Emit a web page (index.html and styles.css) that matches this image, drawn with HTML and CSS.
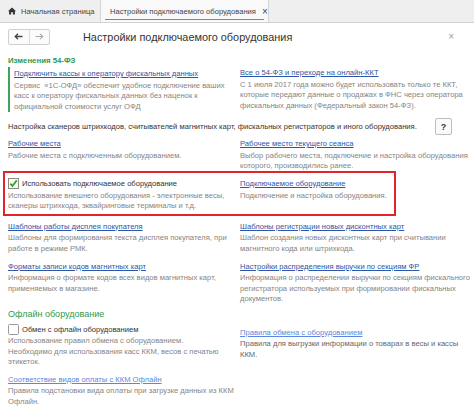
FILE: index.html
```html
<!DOCTYPE html>
<html lang="ru">
<head>
<meta charset="utf-8">
<title>Настройки подключаемого оборудования</title>
<link rel="stylesheet" href="styles.css">
</head>
<body>
<div class="tabs">
  <div class="tab tab-home">
    <svg class="home-icon" width="8" height="8" viewBox="0 0 8 8"><path d="M4 0.5 L0 4.2 L1.1 4.2 L1.1 7.5 L3.1 7.5 L3.1 5.2 L4.9 5.2 L4.9 7.5 L6.9 7.5 L6.9 4.2 L8 4.2 Z" fill="#333"/></svg>
    <span>Начальная страница</span>
  </div>
  <div class="tab tab-active">
    <span>Настройки подключаемого оборудования</span>
    <span class="tab-close">×</span>
  </div>
</div>

<div class="header">
  <div class="nav">
    <span class="nav-btn">
      <svg width="9" height="7" viewBox="0 0 9 7"><path d="M8.5 3.5 H1.5 M4 0.8 L1.2 3.5 L4 6.2" stroke="#444" stroke-width="1.3" fill="none"/></svg>
    </span>
    <span class="nav-btn">
      <svg width="9" height="7" viewBox="0 0 9 7"><path d="M0.5 3.5 H7.5 M5 0.8 L7.8 3.5 L5 6.2" stroke="#aaa" stroke-width="1.1" fill="none"/></svg>
    </span>
  </div>
  <h1 class="title">Настройки подключаемого оборудования</h1>
  <span class="close">×</span>
</div>

<div class="content">
  <div class="group-title">Изменения 54-ФЗ</div>
  <div class="row row-54">
    <div class="item item-bar">
      <a class="link">Подключить кассы к оператору фискальных данных</a>
      <p class="desc">Сервис&nbsp; «1С-ОФД» обеспечит удобное подключение ваших<br>касс к оператору фискальных данных без наценок к<br>официальной стоимости услуг ОФД</p>
    </div>
    <div class="item">
      <a class="link">Все о 54-ФЗ и переходе на онлайн-ККТ</a>
      <p class="desc">С 1 июля 2017 года можно будет использовать только те ККТ,<br>которые передают данные о продажах в ФНС через оператора<br>фискальных данных (Федеральный закон 54-ФЗ).</p>
    </div>
  </div>

  <div class="intro">
    <span>Настройка сканеров штрихкодов, считывателей магнитных карт, фискальных регистраторов и иного оборудования.</span>
    <span class="help">?</span>
  </div>

  <div class="row row-first">
    <div class="item">
      <a class="link">Рабочие места</a>
      <p class="desc">Рабочие места с подключенным оборудованием.</p>
    </div>
    <div class="item">
      <a class="link">Рабочее место текущего сеанса</a>
      <p class="desc">Выбор рабочего места, подключение и настройка оборудования<br>которого, производились ранее.</p>
    </div>
  </div>

  <div class="row row-marked">
    <div class="item">
      <label class="check">
        <svg class="box" width="11" height="11" viewBox="0 0 11 11"><rect x="0.5" y="0.5" width="10" height="10" fill="#fbfbe8" stroke="#8a8a8a"/><path d="M2.3 5.6 L4.4 8 L8.8 2.4" stroke="#2c9a3c" stroke-width="1.7" fill="none"/></svg>
        <span>Использовать подключаемое оборудование</span>
      </label>
      <p class="desc">Использование внешнего оборудования - электронные весы,<br>сканеры штрихкода, эквайринговые терминалы и т.д.</p>
    </div>
    <div class="item">
      <a class="link">Подключаемое оборудование</a>
      <p class="desc">Подключение и настройка оборудования.</p>
    </div>
  </div>

  <div class="row row-after-mark">
    <div class="item">
      <a class="link">Шаблоны работы дисплея покупателя</a>
      <p class="desc">Шаблоны для формирования текста дисплея покупателя, при<br>работе в режиме РМК.</p>
    </div>
    <div class="item">
      <a class="link">Шаблоны регистрации новых дисконтных карт</a>
      <p class="desc">Шаблон создания новых дисконтных карт при считывании<br>магнитного кода или штрихкода.</p>
    </div>
  </div>

  <div class="row">
    <div class="item">
      <a class="link">Форматы записи кодов магнитных карт</a>
      <p class="desc">Информация о формате кодов всех видов магнитных карт,<br>применяемых в магазине.</p>
    </div>
    <div class="item">
      <a class="link">Настройки распределения выручки по секциям ФР</a>
      <p class="desc">Информация о распределении выручки по секциям фискального<br>регистратора используемых при формировании фискальных<br>документов.</p>
    </div>
  </div>

  <div class="section-title">Офлайн оборудование</div>
  <div class="row row-offline">
    <div class="col">
      <div class="item">
        <label class="check">
          <svg class="box" width="11" height="11" viewBox="0 0 11 11"><rect x="0.5" y="0.5" width="10" height="10" rx="1" fill="#fff" stroke="#9a9a9a"/></svg>
          <span>Обмен с офлайн оборудованием</span>
        </label>
        <p class="desc">Использование правил обмена с оборудованием.<br>Необходимо для использования касс ККМ, весов с печатью<br>этикеток.</p>
      </div>
      <div class="item item-next">
        <a class="link link-light">Соответствие видов оплаты с ККМ Офлайн</a>
        <p class="desc">Правила подстановки вида оплаты при загрузке данных из ККМ<br>Офлайн.</p>
      </div>
    </div>
    <div class="col col-right">
      <div class="item">
        <a class="link link-light">Правила обмена с оборудованием</a>
        <p class="desc desc-dark">Правила для выгрузки информации о товарах в весы и кассы<br>ККМ.</p>
      </div>
    </div>
  </div>
</div>
</body>
</html>
```

FILE: styles.css
```css
* { box-sizing: border-box; }

body {
  margin: 0;
  width: 474px;
  height: 412px;
  overflow: hidden;
  background: #ffffff;
  font-family: "Liberation Sans", Arial, sans-serif;
  font-size: 7.6px;
  color: #333333;
}

.tabs {
  display: flex;
  height: 23px;
  background: #efefef;
  border-bottom: 1px solid #d2d2d2;
}

.tab {
  display: flex;
  align-items: center;
  gap: 5px;
  font-size: 7.6px;
  color: #444;
  white-space: nowrap;
}

.tab-home {
  width: 101px;
  padding-left: 8px;
  border-right: 1px solid #d6d6d6;
}

.home-icon { flex: none; }

.tab-active {
  position: relative;
  width: 168px;
  padding-left: 9px;
  gap: 6px;
  background: #f9f9f9;
  border-right: 1px solid #d6d6d6;
}

.tab-active::after {
  content: "";
  position: absolute;
  left: 4px;
  right: 4px;
  bottom: 2px;
  height: 1.5px;
  background: #4ea66c;
}

.tab-close {
  font-size: 10px;
  color: #444;
}

.header {
  display: flex;
  align-items: center;
  height: 17px;
  margin-top: 5px;
  padding: 0 8px;
}

.nav {
  display: flex;
  width: 42px;
  height: 16px;
  border: 1px solid #cfcfcf;
  border-radius: 2px;
  background: #fbfbfb;
}

.nav-btn {
  flex: 1;
  display: flex;
  align-items: center;
  justify-content: center;
}

.nav-btn + .nav-btn { border-left: 1px solid #dddddd; }

.title {
  margin: 0 0 0 33px;
  font-size: 10.9px;
  font-weight: normal;
  color: #333;
  white-space: nowrap;
}

.close {
  margin-left: auto;
  margin-right: 12px;
  font-size: 10px;
  color: #9a9a9a;
}

.content {
  padding: 0 8px;
}

.group-title {
  margin-top: 10px;
  line-height: 11px;
  font-size: 7.8px;
  font-weight: bold;
  color: #2e9a4e;
}

.row {
  position: relative;
  display: grid;
  grid-template-columns: 232px 1fr;
  margin-top: 6.5px;
}

.row-54 { margin-top: 1px; }
.row-first { margin-top: 3px; }
.row-after-mark { margin-top: 9px; }

.item {
  white-space: nowrap;
}

.item-bar {
  border-left: 2px solid #3fa45a;
  padding-left: 4px;
  padding-top: 1px;
}

.link {
  display: block;
  line-height: 11px;
  color: #2d55a8;
  text-decoration: underline;
  text-underline-offset: 1px;
}

.link-light { color: #5a88dc; }

.desc {
  margin: 1.5px 0 0;
  line-height: 10.5px;
  color: #858585;
}

.desc-dark { color: #666; }

.intro {
  display: flex;
  align-items: center;
  justify-content: space-between;
  height: 17px;
  margin-top: 6px;
  padding-right: 14px;
  color: #333;
  white-space: nowrap;
}

.help {
  width: 17px;
  height: 17px;
  display: flex;
  align-items: center;
  justify-content: center;
  border: 1px solid #bdbdbd;
  border-radius: 2px;
  background: #fafafa;
  font-size: 9px;
  font-weight: bold;
  color: #333;
}

.row-marked::before {
  content: "";
  position: absolute;
  left: -5px;
  top: -7px;
  width: 389px;
  height: 41px;
  border: 2px solid #e2232c;
}

.check {
  display: flex;
  align-items: center;
  gap: 3px;
  height: 11px;
  color: #333;
}

.box { flex: none; }

.section-title {
  margin-top: 3px;
  line-height: 12px;
  font-size: 9px;
  color: #2e9a4e;
}

.row-offline { margin-top: 4px; }

.item-next { margin-top: 6px; }

.col-right { padding-top: 3px; }
```
